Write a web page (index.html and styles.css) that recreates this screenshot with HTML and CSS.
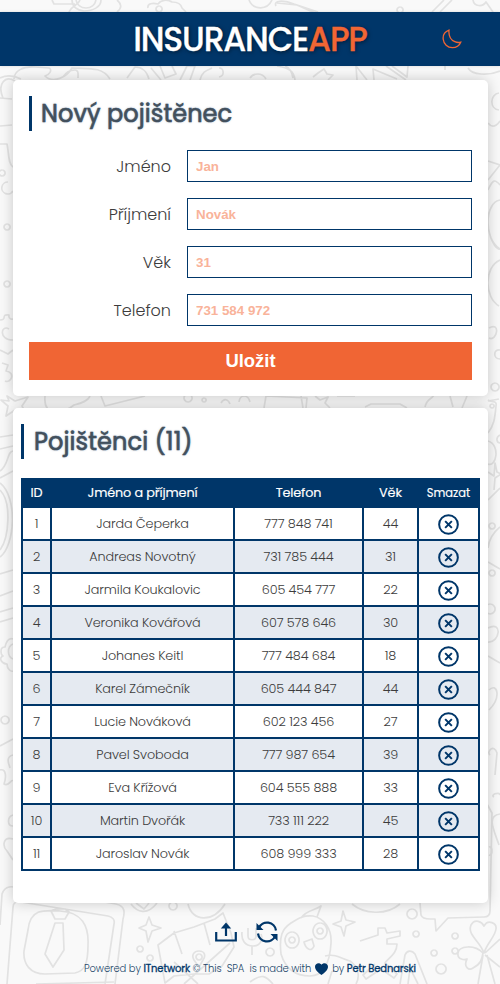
FILE: index.html
```html
<!DOCTYPE html>
<html lang="cs">
<head>
<meta charset="utf-8">
<title>InsuranceApp</title>
<link rel="stylesheet" href="styles.css">
</head>
<body>
<svg class="doodles" viewBox="0 0 500 984" aria-hidden="true">
<!-- top strip -->
<path d="M52 0l2 4h21M80 0c-2 6-8 5-11 12M72 0c0 7 5 10 12 11 9 0 17-4 17-11M76 0c1 5 5 8 10 8s9-3 10-8M117 0c5 4 5 8 0 12M148 8c-1-5 5-5 10-4 3-4 9-5 14-2 5 0 9 2 10 6l4 4M159 6a3 3 0 1 0 .1 0M249 0c4 10 18 11 23 0M277 3l20 2 18 8M276 6c-3-6 8-6 18-2l24 8M400 7a3 3 0 1 0 .1 0M432 12l12-12M440 12l12-12M473 0c1 7 10 7 13 2l7 10"/>
<!-- gap under the header -->
<path d="M0 78c8-4 15-2 21 1M3 98c-6-14 2-23 12-17M14 79c0-8 9-13 21-12l14 1c4 2 0 7-4 8 8 8 22 1 27-8 15 1 30-2 38 11M63 77c3-5 8-7 12-7s3 5 3 8M127 78l8-11c8 0 12 5 14 12M151 68l10 12M160 66l5 12 11-4-4-8M180 80l7-14h8l-5 14M219 68c5 0 6 8 0 9M200 80c2-9 8-10 12-12M250 78c3-5 12-6 16 1M277 66c12 2 17 5 18 14M285 66c5 2 7 6 8 12M313 77l5-4 6-4 3 5 6 1-5 5M357 80l-1-14 11 14M374 80l-1-11 24 10M386 66l20 14M392 66l15 11 1-11M445 70v-4M468 68c4 7 20 8 32 3"/>
<!-- left edge -->
<path d="M0 144h7c2 9 1 20 6 23M0 98l12 1M0 126l12-1M2 170a3 3 0 1 0 .1 0M8 182a6 6 0 1 0 5 9M7 224a3 3 0 1 0 .1 0M7 281a3 3 0 1 0 .1 0M0 320c8 0 0-6 9-5-1 5 4 4 4 4M9 329c-8-5-11 11 4 11M0 350l8 4 5-4M2 363l6 2-2 6c10 1 5 13-1 10M7 396l8 5 13-4-6 9 4 8-11-4-9 6 2-10-7-6 8 1ZM45 396c-2 22 18 18 29 9 8-2 14-4 16-9M101 396l4 10 40-10M188 394a4 4 0 1 0 .1 0M204 398a2 2 0 1 0 .1 0M221 403c3-5 7-4 9 1M239 402c1-8 9-8 11 0M0 437l13-2M0 449l13-3M0 471c9-6 7-20 13-20M0 478l13-7M0 483c18 14 15 63 0 74M0 490c12 12 9 48 0 60M0 574l13-4M0 596l13-5M0 612l13-4M0 622l13-4M13 639c-5-2-7 4-8 8-6 0-4 8-2 9-5 2-1 8 4 8 0 5 4 8 6 7M13 644a7 8 0 0 0 0 15M5 716a4 4 0 1 0 .1 0M0 746l13-7M13 755c-8 2-4 9-3 13M0 770c7-2 6 9 4 14 5 3 7-5 9-3M13 815c-6 2-6 11 0 11M13 839c-10-3-11 7-6 12l6 9M0 925l2-31c2-6 7-8 12-7l102 17c9 2 9 8 7 15l-8 65"/>
<!-- gap between the cards -->
<path d="M264 408l2-12 41 2-1 10M301 396l2 12M315 396l5 4 8-3-3 6 5 5M337 396h18M365 407l6-3h29l7 4M425 407c2-9 6-7 9-12M450 396l3 11M462 408l5-12M488 401l11-2"/>
<!-- right edge -->
<path d="M499 93c-9 1-10 16 0 17M488 123c6 8 12-2 12-2M488 161l12 4-12 15M488 190c5-11 7-11 12-5M500 200c-15 2-17 39 0 49M492 206c-10 16 1 44 8 43M500 260c-16 7-16 37-1 46M489 328c12-7 8 14 0 10M500 350c-7-1-7 9 0 9M495 383a4 4 0 1 0 .1 0M488 400c5 3 9 0 8 6-1 9-1 18-8 27M492 404a2 2 0 1 0 .1 0M488 441c13 4 8 27 0 23M500 435c-5 3-3 8 0 8M488 472l6 4 1-13 2 9 4 2-6 4-1 12M488 500l12-12M492 523a3 3 0 1 0 .1 0M488 548c1-9 6-16 12-21M488 562l12 7M492 570a3 3 0 1 0 .1 0M490 604a5 5 0 1 0 .1 0M488 628c15-8 12 15 0 14M488 656l12 7M489 690c8-8 13 7 0 20M490 755c-4-3 4-12 7-2l-2 22M494 797c-4-2 5-6 6-2M500 814c-14 2-6 16-1 31M489 847c4-2 4 10 0 8"/>
<!-- left doodles at the bottom -->
<path d="M7 984l6-77c0-4 3-6 8-5l87 14c5 1 7 4 6 8l-9 60M28 930c2-21 15-20 32-19 22 1 29 15 28 34 0 18-3 26-13 28l-30 1c-15 0-22-10-21-23ZM51 911l4 8h10l4-7-4-3-9 0ZM55 923h8l1 27-11 17-8-13ZM36 984l78-2M131 904c6 8 16 12 26-1M136 903l8 6 5-6M173 902a4 4 0 1 0 .1 0M188 904c4 18 25 19 37 0M149 917l3 8 9 3-9 3-4 11-2-11-7-3 7-3ZM140 946a3 3 0 1 0 .1 0M150 955a3 3 0 1 0 .1 0M158 945l16-12 20-6 21-8 8-6 8 20 3 14-12 19-13 8-15 0-20 2-9 7ZM174 931l8 23M204 923l6 22M174 962l24 22M184 984l46-41M199 951c6 0 7 5 4 9l-4 7-5-7c-3-5 0-9 5-9ZM199 954a3 3 0 1 0 .1 0"/>
<!-- right doodles at the bottom -->
<path d="M242 932c-1 8 3 14 11 14s10-7 8-12M248 928v8c0 5 8 5 8 0v-8M252 946v9M270 948a4 4 0 1 0 .1 0M250 982c12-9 16-6 23 2M281 954c-2-18 1-25 10-31 8-5 13-8 22-7 11 2 19 13 18 27-1 20-8 33-21 33-16 0-25-9-29-22ZM301 918c5-8 15-8 20-12l-4 11M292 932a7 8 0 1 0 .1 0M292 937a3 3 0 1 0 .1 0M320 923a7 8 0 1 0 .1 0M320 928a3 3 0 1 0 .1 0M304 942l8-3 2 7c-2 6-8 4-10-4ZM325 956c12-3 18 4 25 5 7 5 11 14 6 23M328 984l4-13M343 911l3 9 9 2-9 4-2 10-3-9-8-3 8-3ZM352 904c12 10 34 12 48 0M412 909a5 5 0 1 0 .1 0M416 931a3 3 0 1 0 .1 0M360 941l18-6v-7h7l2 5 13-2v5l-13 3v5h10c0 10-9 14-12 19l12 11-3 4-13-9-15 10-3-4 12-11M420 903l1 12c1 3 5 4 9 4h5l1 12 12-13 36-1c4 0 6-2 6-6l2-98-5-9M400 984l5-29c2-5 7-5 10-1l12 30M408 984l2-16 8 16M434 950a3 3 0 1 0 .1 0M455 933a3 3 0 1 0 .1 0M455 948a3 3 0 1 0 .1 0M441 964a5 5 0 1 0 .1 0M484 953c-4-12-17-18-13-28 4-7 11-3 13 1 4-7 13-3 12 3-1 8-9 14-12 24ZM483 953c-9-9-24-7-25 0-1 7 7 7 9 6-4 8 2 12 6 9 8-4 9-9 10-15ZM485 953l15-14M485 955l15 12M483 955l-5 29M487 955l8 29"/>
</svg>
<header class="topbar">
  <h1 class="logo">INSURANCE<span class="logo-accent">APP</span></h1>
  <svg class="moon" viewBox="0 0 20 20"><path d="M7 1.2C2.9 2.7.8 6.5 1.2 10.3c.5 4.800 4.300 8.300 9.100 8.300 3.900 0 7.200-2.200 8.400-5.400-2 .5-3.900.4-5.900-.5C8.800 11 6.500 6.500 7 1.200Z"/></svg>
</header>
<main>
  <section class="card form-card">
    <h2 class="title">Nový pojištěnec</h2>
    <form class="form">
      <label for="first">Jméno</label><input id="first" placeholder="Jan">
      <label for="last">Příjmení</label><input id="last" placeholder="Novák">
      <label for="age">Věk</label><input id="age" placeholder="31">
      <label for="phone">Telefon</label><input id="phone" placeholder="731 584 972">
      <button type="button">Uložit</button>
    </form>
  </section>
  <section class="card list-card">
    <h2 class="title title-list">Pojištěnci (11)</h2>
    <table>
      <colgroup><col class="c-id"><col class="c-name"><col class="c-phone"><col class="c-age"><col class="c-del"></colgroup>
      <thead><tr><th>ID</th><th>Jméno a příjmení</th><th>Telefon</th><th>Věk</th><th class="small">Smazat</th></tr></thead>
      <tbody id="rows"></tbody>
    </table>
  </section>
</main>
<footer>
  <div class="actions">
    <svg width="22" height="20" viewBox="0 0 22 20"><path class="line" d="M1.200 10v8.500h19.600V10M11 14V4"/><path class="solid" d="M11 .5l5.200 6H5.800Z"/></svg>
    <svg width="22" height="22" viewBox="0 0 22 22"><path class="line" d="M2.800 7A9 9 0 0 1 20 9.500M19.200 15A9 9 0 0 1 2 12.500"/><path class="solid" d="M.5 2v7h7ZM21.500 20v-7h-7Z"/></svg>
  </div>
  <p class="credit"><span>Powered by <b>ITnetwork</b> © This&nbsp; SPA &nbsp;is made with</span><svg class="heart" viewBox="0 0 13 12"><path d="M6.500 12C4 10.200 0 7.500 0 3.800 0 0 4.600-1 6.500 1.700 8.400-1 13 0 13 3.800c0 3.700-4 6.400-6.500 8.200Z"/></svg><span>by <b>Petr Bednarski</b></span></p>
</footer>
<script src="app.js"></script>
</body>
</html>
```
FILE: styles.css
```css
* { box-sizing: border-box; }
body {
  margin: 0;
  padding-top: 12px;
  height: 984px;
  position: relative;
  background: #f9f9f9;
  color: #3c3c3c;
  font-family: Poppins, Inter, "Open Sans", sans-serif;
  font-weight: 300;
  overflow: hidden;
}
.doodles {
  position: absolute;
  inset: 0;
  width: 500px;
  height: 984px;
  z-index: -1;
  fill: none;
  stroke: #e2e2e2;
  stroke-width: 1.7;
  stroke-linejoin: round;
}
.topbar {
  height: 54px;
  background: #003669;
  display: grid;
  grid-template-columns: 1fr auto 1fr;
  align-items: center;
  box-shadow: 0 0 3px #0002;
}
.logo {
  grid-column: 2;
  margin: 0;
  padding-top: 1px;
  color: #fff;
  font-size: 33px;
  line-height: 53px;
  font-weight: 500;
  letter-spacing: -1.2px;
  -webkit-text-stroke: 0.3px;
  text-shadow: 1px 1px 4px #0008;
}
.logo-accent { color: #f16634; }
.moon {
  width: 20px;
  height: 20px;
  justify-self: end;
  margin-right: 38px;
  fill: none;
  stroke: #f16634;
  stroke-width: 1.300;
}
.card {
  width: 475px;
  margin-left: 13px;
  background: #fff;
  border-radius: 5px;
  box-shadow: 0 0 14px #0003;
}
.form-card { margin-top: 14px; height: 316px; padding: 16px; }
.list-card { margin-top: 12px; height: 495px; padding: 16px 8px; }
.title {
  margin: 0;
  height: 35px;
  line-height: 36px;
  border-left: 3px solid #003669;
  padding-left: 9px;
  font-size: 24px;
  font-weight: 400;
  letter-spacing: 0.08px;
  color: #42505d;
  -webkit-text-stroke: 0.6px #42505d;
  text-shadow: 0 0 2px #00366980;
}
.form {
  margin-top: 19px;
  display: grid;
  grid-template-columns: 142px 285px;
  column-gap: 16px;
  row-gap: 16px;
}
label { text-align: right; line-height: 32px; padding-top: 1px; height: 32px; font-size: 16px; }
input {
  height: 32px;
  border: 1px solid #003669;
  border-radius: 0;
  padding: 0 8px;
  background: #fff;
  font: bold 13.333px "Liberation Sans", sans-serif;
}
input::placeholder { color: #f9b39a; opacity: 1; }
button {
  grid-column: 1 / -1;
  height: 38px;
  padding: 0;
  border: 0;
  background: #f06534;
  color: #fff;
  font: bold 18.400px "Liberation Sans", sans-serif;
}
.title-list { padding-left: 10px; letter-spacing: 0.12px; }
table {
  margin-top: 19px;
  width: 459px;
  table-layout: fixed;
  border-spacing: 2px;
  background: #003669;
  text-align: center;
  font-size: 12.800px;
  letter-spacing: -0.12px;
}
.c-id { width: 27px; }
.c-name { width: 181px; }
.c-phone { width: 127px; }
.c-age { width: 53px; }
.c-del { width: 59px; }
th, td { padding: 0; }
th { height: 26px; color: #fff; font-weight: 400; line-height: 26px; -webkit-text-stroke: 0.15px; }
th.small { font-size: 11.500px; letter-spacing: 0; }
td { height: 31px; background: #fff; line-height: 31px; }
tr:nth-child(even) td { background: #e5eaf1; }
.del {
  display: block;
  width: 21px;
  height: 21px;
  margin: 2px auto 0;
  fill: none;
  stroke: #003669;
  stroke-width: 2.1;
}
.actions {
  margin-top: 17px;
  height: 24px;
  display: flex;
  justify-content: center;
  align-items: center;
  gap: 19px;
  padding-right: 8px;
}
.line { fill: none; stroke: #003669; stroke-width: 2.200; }
.solid { fill: #003669; }
.credit {
  margin: 17px 0 0;
  display: flex;
  justify-content: center;
  align-items: center;
  gap: 4px;
  font-size: 10px;
  letter-spacing: -0.12px;
  line-height: 16px;
  color: #23476a;
}
.credit b { font-weight: 400; color: #003669; -webkit-text-stroke: 0.3px; }
.heart { width: 13px; height: 12px; fill: #003669; }
```
FILE: app.js
```js
const people = [
  ["Jarda Čeperka", "777 848 741", 44],
  ["Andreas Novotný", "731 785 444", 31],
  ["Jarmila Koukalovic", "605 454 777", 22],
  ["Veronika Kovářová", "607 578 646", 30],
  ["Johanes Keitl", "777 484 684", 18],
  ["Karel Zámečník", "605 444 847", 44],
  ["Lucie Nováková", "602 123 456", 27],
  ["Pavel Svoboda", "777 987 654", 39],
  ["Eva Křížová", "604 555 888", 33],
  ["Martin Dvořák", "733 111 222", 45],
  ["Jaroslav Novák", "608 999 333", 28]
];
const icon = '<svg class="del" viewBox="0 0 22 22"><circle cx="11" cy="11" r="9.8"/><path d="M7.500 7.500l7 7M14.500 7.500l-7 7"/></svg>';
document.getElementById("rows").innerHTML = people
  .map(([name, phone, age], i) => `<tr><td>${i + 1}</td><td>${name}</td><td>${phone}</td><td>${age}</td><td>${icon}</td></tr>`)
  .join("");
```
